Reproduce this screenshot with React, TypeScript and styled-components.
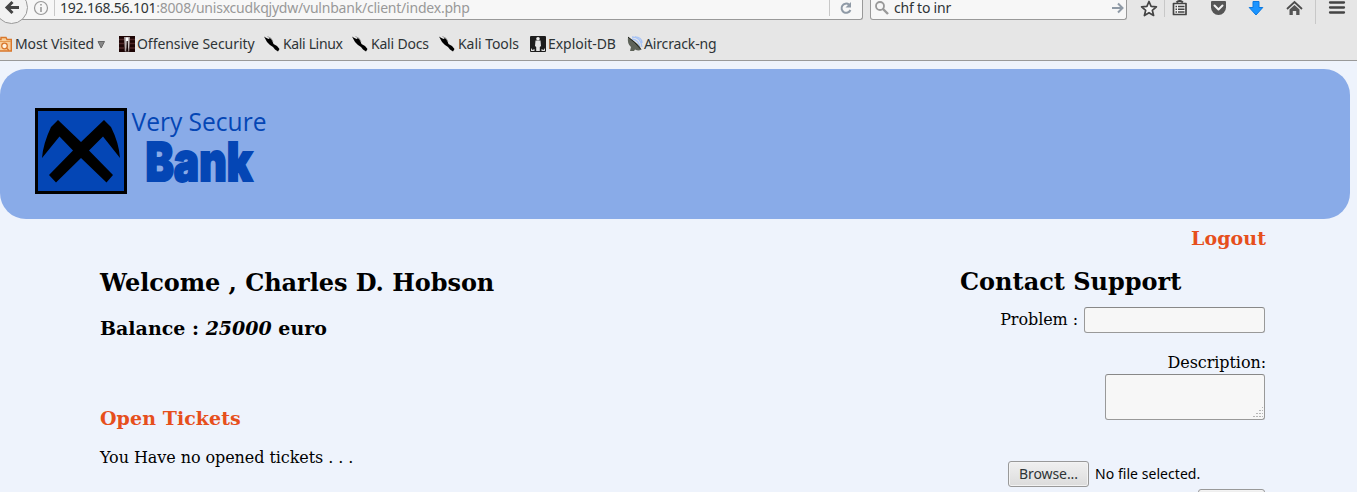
import React from 'react';
import styled, { createGlobalStyle } from 'styled-components';

const ui = `'Noto Sans', 'Open Sans', sans-serif`;
const serif = `'DejaVu Serif', serif`;

const GlobalStyle = createGlobalStyle`
  * { box-sizing: border-box; }
  html, body { margin: 0; background: #eef3fc; overflow: hidden; }
  body { width: 1357px; height: 492px; }
  svg { display: block; flex: none; }
`;

const Screen = styled.div`
  width: 1357px;
  height: 492px;
  overflow: hidden;
  background: #eef3fc;
`;

const Chrome = styled.div`
  height: 61px;
  background: #e6e6e6;
  border-bottom: 1px solid #999;
  font-family: ${ui};
  color: #2e3436;
  overflow: hidden;
`;

const NavBar = styled.div`
  display: flex;
  align-items: flex-start;
  height: 28px;
`;

const Back = styled.div`
  flex: none;
  width: 33px;
  height: 33px;
  margin: -9px -28px 0 -5px;
  border: 1px solid #999;
  border-radius: 50%;
  background: #f2f2f2;
  position: relative;
  padding: 7px 0 0 7px;
`;

const Field = styled.div<{ $w: number }>`
  display: flex;
  align-items: flex-start;
  width: ${(p) => p.$w}px;
  height: 20px;
  background: #f7f7f7;
  border: 1px solid #999;
  border-top: 0;
  border-radius: 0 0 3px 3px;
`;

const UrlField = styled(Field)`
  margin-right: 7px;
  padding-left: 32px;
`;

const SearchField = styled(Field)`
  padding-left: 4px;
`;

const Label = styled.span<{ $ls?: number }>`
  font-size: 14px;
  letter-spacing: ${(p) => p.$ls ?? 0}px;
  line-height: 20px;
  white-space: pre;
  flex: none;
`;

const UrlText = styled(Label)`
  margin: -2px auto 0 5px;
  color: #999;
  b { font-weight: 400; color: #2e3436; }
`;

const SearchText = styled(Label)`
  margin: -2px auto 0 5px;
`;

const Divider = styled.i<{ $h: number }>`
  flex: none;
  width: 1px;
  height: ${(p) => p.$h}px;
  background: #c8c8c8;
`;

const Tools = styled.div`
  display: flex;
  margin-left: 13px;
`;

const Tool = styled.div<{ $gap: number }>`
  margin-right: ${(p) => p.$gap}px;
`;

const Bookmarks = styled.div`
  display: flex;
  align-items: center;
  height: 32px;
`;

const Bookmark = styled.div<{ $w: number; $gap: number }>`
  display: flex;
  align-items: center;
  flex: none;
  gap: ${(p) => p.$gap}px;
  width: ${(p) => p.$w}px;
`;

const Banner = styled.header`
  width: 1350px;
  height: 150px;
  margin-top: 8px;
  padding: 37px 0 0 34px;
  background: #89abe8;
  border-radius: 26px;
`;

const Main = styled.main`
  display: flex;
  justify-content: space-between;
  width: 1166px;
  margin-left: 100px;
  font-family: ${serif};
  font-size: 16px;
  line-height: 19px;
  color: #000;
`;

const Account = styled.section`
  padding-top: 50px;
`;

const Support = styled.section`
  display: flex;
  flex-direction: column;
  align-items: flex-end;
  width: 306px;
  padding-top: 8px;
`;

const Heading = styled.h2<{ $ls?: number }>`
  margin: 0;
  font-size: 24px;
  line-height: 28px;
  letter-spacing: ${(p) => p.$ls ?? 0}px;
  white-space: nowrap;
`;

const SubHeading = styled.h3<{ $top?: number; $accent?: boolean; $ls?: number }>`
  margin: ${(p) => p.$top ?? 0}px 0 0;
  font-size: 19px;
  line-height: 23px;
  letter-spacing: ${(p) => p.$ls ?? 0}px;
  white-space: nowrap;
  color: ${(p) => (p.$accent ? '#e64f1c' : '#000')};
`;

const Note = styled.p`
  margin: 18px 0 0;
  letter-spacing: -0.07px;
`;

const SupportHeading = styled(Heading)`
  align-self: flex-start;
  margin-top: 18px;
`;

const FormRow = styled.label<{ $top: number }>`
  display: flex;
  align-items: flex-start;
  gap: 6px;
  margin-top: ${(p) => p.$top}px;
`;

const Caption = styled.span<{ $top?: number }>`
  padding-top: ${(p) => p.$top ?? 0}px;
  letter-spacing: -0.08px;
`;

const Box = styled.div<{ $w: number; $h: number; $top?: number }>`
  display: flex;
  justify-content: flex-end;
  align-items: flex-end;
  width: ${(p) => p.$w}px;
  height: ${(p) => p.$h}px;
  margin: ${(p) => p.$top ?? 0}px 1px 0 0;
  border: 1px solid #999;
  border-top-color: #888;
  border-radius: 3px;
  background: #f7f7f7;
`;

const FileRow = styled.div`
  display: flex;
  align-items: center;
  align-self: flex-start;
  gap: 6px;
  margin: 41px 0 0 48px;
  font-family: ${ui};
`;

const Button = styled.div<{ $w: number }>`
  display: flex;
  align-items: center;
  justify-content: center;
  width: ${(p) => p.$w}px;
  height: 26px;
  border: 1px solid #999;
  border-radius: 3px;
  background: linear-gradient(#f0f0f0, #dcdcdc);
  box-shadow: inset 0 0 0 1px #f3f3f3;
  color: #2e3436;
`;

const Submit = styled(Button)`
  margin: 2px 1px 0 0;
`;

const KaliIcon = () => (
  <svg width="17" height="16" viewBox="0 0 17 16">
    <path d="M0 .5l1.500 1 3 1.500 1.500-1 2 2 1.500 4 3.500 2 2.500 3-1.500 2.500-3-2-2-2.500-3-2-3-3z" fill="#000" />
    <path d="M3.500.5Q8 1.500 9 6" fill="none" stroke="#777" strokeWidth=".7" />
  </svg>
);

const FolderIcon = () => (
  <svg width="12" height="16" viewBox="0 0 12 16">
    <path d="M-4 3.500h5V1.500h5l1 2h4.300v11.500H-4z" fill="#f9cf9a" stroke="#d9772b" strokeWidth="1.400" />
    <path d="M-4 5.500h15" stroke="#e69a50" />
    <circle cx="4.500" cy="10" r="2.800" fill="#fff3df" stroke="#d9772b" strokeWidth="1.300" />
    <path d="M6.500 12l2.500 2.500" stroke="#d9772b" strokeWidth="1.300" />
  </svg>
);

const OffsecIcon = () => (
  <svg width="16" height="16" viewBox="0 0 16 16">
    <path d="M0 0h16v16H0z" fill="#1d0505" />
    <path d="M0 3.500h5M0 7.500h5M11 3.500h5M11 7.500h5M0 12h5M11 12h5" stroke="#4c2626" strokeWidth="1.500" />
    <path d="M5 1h6l-.8 14.500H5.800z" fill="#a79c9c" />
    <path d="M6.800 1.500h2.600v11H6.800z" fill="#fff" />
    <path d="M7.600 5h1.200l.4 10.500H7.200z" fill="#150505" />
  </svg>
);

const ExploitIcon = () => (
  <svg width="16" height="16" viewBox="0 0 16 16">
    <rect width="16" height="16" rx="1" fill="#1c1c1c" />
    <circle cx="8" cy="2.800" r="1.800" fill="#eee" />
    <path d="M5.500 4.500h5l.5 5.500-1.200 1v4H6.200v-4L5 10z" fill="#e4e4e4" />
    <path d="M1 12l1.500 2 2-1v2H1zM15 12l-1.500 2-2-1v2H15z" fill="#ddd" />
  </svg>
);

const AircrackIcon = () => (
  <svg width="16" height="16" viewBox="0 0 16 16">
    <path d="M5 1q9 0 10 10M8 .8q6.500 0 7.200 6M5 3q7 1 8 8" fill="none" stroke="#a9c4f5" strokeWidth="1.300" />
    <path d="M1 1q-1 7 3 10l-1 4h4l1-1.500q4 2 6 0Q13 8 1 1z" fill="#5d6258" />
    <path d="M1 1Q8 6 14 13.500" stroke="#20231e" fill="none" />
  </svg>
);

const Logo = () => (
  <svg width="240" height="90" viewBox="34 106 240 90">
    <rect x="36.500" y="109.500" width="89" height="83" fill="#0446b5" stroke="#000" strokeWidth="3" />
    <path
      d="M58 120L81 142L104 120L111 127Q119 143 120 158L103 136.500L89 150.500L113 175L106.500 182.500L81 158L56 182.500L49 175L73 150.500L59.500 136.500L42 158Q43 144 51 127Z"
      fill="#000"
    />
    <text x="131.500" y="131" fontFamily="'Open Sans', sans-serif" fontSize="25" fill="#0446b5" textLength="135" lengthAdjust="spacingAndGlyphs">Very Secure</text>
    <text x="145.500" y="181" fontFamily="Inter, sans-serif" fontWeight="900" fontSize="54" fill="#0446b5" stroke="#0446b5" strokeWidth="2" textLength="107" lengthAdjust="spacingAndGlyphs">Bank</text>
  </svg>
);

const ToolbarIcons = () => (
  <Tools>
    <Tool $gap={6}>
      <svg width="18" height="18" viewBox="0 0 18 18">
        <path d="M9 1.500l2.100 4.900 5.300.4-4.100 3.500 1.300 5.200L9 12.700l-4.600 2.800 1.300-5.200L1.600 6.800l5.300-.4z" fill="#f4f4f4" stroke="#444" strokeWidth="1.700" strokeLinejoin="round" />
      </svg>
    </Tool>
    <Divider $h={17} />
    <Tool $gap={22}>
      <svg width="23" height="18" viewBox="1 0 23 18">
        <path d="M9.500 3.500h12.500v11H9.500z" fill="#f2f2f2" stroke="#444" strokeWidth="1.700" strokeLinejoin="round" />
        <path d="M12.500 2.500q3.200-3 6.400 0" fill="none" stroke="#444" strokeWidth="2" />
        <path d="M11.500 6.500h1.500m1 0h6.500M11.500 9.200h1.500m1 0h6.500M11.500 12h1.500m1 0h6.500" stroke="#444" strokeWidth="1.500" />
      </svg>
    </Tool>
    <Tool $gap={21}>
      <svg width="17" height="17" viewBox="0 0 17 17">
        <path d="M2 1h13q1 0 1 1v5.500a7.500 7.500 0 0 1-15 0V2q0-1 1-1z" fill="#555" />
        <path d="M4.500 5.500l4 4 4-4" fill="none" stroke="#f2f2f2" strokeWidth="2" strokeLinecap="round" strokeLinejoin="round" />
      </svg>
    </Tool>
    <Tool $gap={22}>
      <svg width="16" height="17" viewBox="0 0 16 17">
        <path d="M5 1.500h6v6h3.800L8 15 1.200 7.500H5z" fill="#1a94ff" stroke="#0a78e0" strokeLinejoin="round" />
      </svg>
    </Tool>
    <Tool $gap={12}>
      <svg width="17" height="17" viewBox="0 0 17 17">
        <path d="M1 9l7.500-7L16 9" fill="none" stroke="#4c4c4c" strokeWidth="1.800" />
        <path d="M3.500 9.500l5-4.600 5 4.600v5.500h-3.300v-4H6.800v4H3.500z" fill="#555" />
      </svg>
    </Tool>
    <Divider $h={24} />
    <svg width="32" height="17" viewBox="0 0 32 17">
      <path d="M14 2.500h14M14 7.500h14M14 12.500h14" stroke="#444" strokeWidth="2.300" strokeLinecap="round" />
    </svg>
  </Tools>
);

export default function App() {
  return (
    <Screen>
      <GlobalStyle />
      <Chrome>
        <NavBar>
          <Back>
            <svg width="18" height="17" viewBox="0 0 18 17">
              <path d="M9.500 3L4 8.500l5.500 5.500M4 8.500h12" fill="none" stroke="#444" strokeWidth="3" />
            </svg>
          </Back>
          <UrlField $w={863}>
            <svg width="22" height="17" viewBox="0 0 22 17">
              <circle cx="8" cy="8" r="6.500" fill="none" stroke="#999" strokeWidth="1.200" />
              <path d="M8 7v5M8 4v1.500" stroke="#999" strokeWidth="1.600" />
              <path d="M21.500 0v16" stroke="#c8c8c8" />
            </svg>
            <UrlText $ls={-0.22}><b>192.168.56.101</b>:8008/unisxcudkqjydw/vulnbank/client/index.php</UrlText>
            <Divider $h={16} />
            <svg width="32" height="17" viewBox="0 0 32 17">
              <path d="M19 4.600a4.600 4.600 0 1 0 1.400 5.400" fill="none" stroke="#8f9aa6" strokeWidth="2" />
              <path d="M21 2v5.500h-5.500z" fill="#8f9aa6" />
            </svg>
          </UrlField>
          <SearchField $w={257}>
            <svg width="14" height="16" viewBox="0 0 14 16">
              <circle cx="5" cy="6" r="4" fill="none" stroke="#999" strokeWidth="1.800" />
              <path d="M8 9l5 5" stroke="#999" strokeWidth="2.400" />
            </svg>
            <SearchText $ls={-0.2}>chf to inr</SearchText>
            <svg width="14" height="16" viewBox="0 0 14 16">
              <path d="M0 8h10M6 3.500L10.500 8 6 12.500" fill="none" stroke="#8f9aa6" strokeWidth="2" />
            </svg>
          </SearchField>
          <ToolbarIcons />
        </NavBar>
        <Bookmarks>
          <Bookmark $w={119} $gap={3}>
            <FolderIcon />
            <Label $ls={-0.13}>Most Visited</Label>
            <svg width="9" height="9" viewBox="0 0 9 9"><path d="M1 1.500h6.500L4.200 8z" fill="#888" stroke="#666" /></svg>
          </Bookmark>
          <Bookmark $w={145} $gap={2}><OffsecIcon /><Label $ls={-0.06}>Offensive Security</Label></Bookmark>
          <Bookmark $w={88} $gap={2}><KaliIcon /><Label $ls={-0.35}>Kali Linux</Label></Bookmark>
          <Bookmark $w={87} $gap={2}><KaliIcon /><Label $ls={-0.2}>Kali Docs</Label></Bookmark>
          <Bookmark $w={91} $gap={2}><KaliIcon /><Label $ls={-0.05}>Kali Tools</Label></Bookmark>
          <Bookmark $w={97} $gap={2}><ExploitIcon /><Label $ls={-0.05}>Exploit-DB</Label></Bookmark>
          <Bookmark $w={100} $gap={1}><AircrackIcon /><Label $ls={-0.15}>Aircrack-ng</Label></Bookmark>
        </Bookmarks>
      </Chrome>
      <Banner><Logo /></Banner>
      <Main>
        <Account>
          <Heading $ls={-0.06}>Welcome , Charles D. Hobson</Heading>
          <SubHeading $top={20}>Balance : <em>25000</em> euro</SubHeading>
          <SubHeading $top={67} $accent $ls={0.07}>Open Tickets</SubHeading>
          <Note>You Have no opened tickets . . .</Note>
        </Account>
        <Support>
          <SubHeading $accent $ls={0.05}>Logout</SubHeading>
          <SupportHeading>Contact Support</SupportHeading>
          <FormRow $top={11}><Caption $top={3}>Problem :</Caption><Box $w={181} $h={26} /></FormRow>
          <FormRow $top={20}><Caption>Description:</Caption></FormRow>
          <Box $w={160} $h={46} $top={2}>
            <svg width="12" height="12" viewBox="0 0 12 12">
              <path d="M1 9.500h10M4 6.500h7M7 3.500h4M10 .5h1" stroke="#b5b5b5" strokeDasharray="2 1" />
            </svg>
          </Box>
          <FileRow>
            <Button $w={81}><Label $ls={-0.1}>Browse...</Label></Button>
            <Label $ls={0.05}>No file selected.</Label>
          </FileRow>
          <Submit $w={67} />
        </Support>
      </Main>
    </Screen>
  );
}
